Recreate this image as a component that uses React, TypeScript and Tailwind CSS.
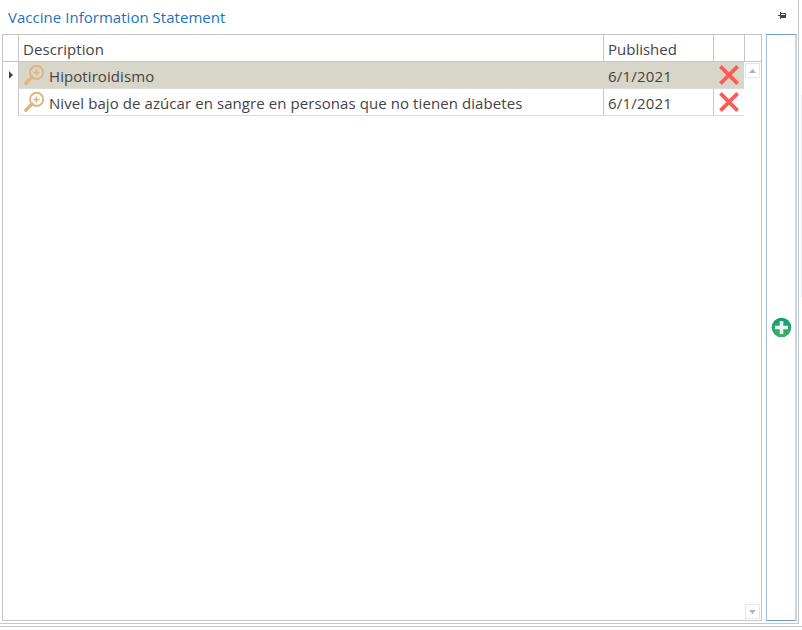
const rows = [
  { name: "Hipotiroidismo", published: "6/1/2021", selected: true },
  {
    name: "Nivel bajo de azúcar en sangre en personas que no tienen diabetes",
    published: "6/1/2021",
    selected: false,
  },
];

function SearchIcon() {
  return (
    <svg width="20" height="20" viewBox="0 0 20 20" fill="none" stroke="#e0b583" className="shrink-0 overflow-visible">
      <circle cx="12.6" cy="7.4" r="6.6" strokeWidth="2" />
      <path d="M8 12L1.8 18.2" strokeWidth="3.4" strokeLinecap="round" />
      <path d="M12.5 4.4v6.2M9.4 7.5h6.2" strokeWidth="1.7" />
    </svg>
  );
}

function DeleteIcon() {
  return (
    <svg width="20" height="20" viewBox="0 0 20 20" stroke="#ff5a5a" strokeWidth="3.8">
      <path d="M1.4 1.4L18.6 18.6M18.6 1.4L1.4 18.6" />
    </svg>
  );
}

function PinIcon() {
  return (
    <svg width="8" height="7" viewBox="0 0 8 7" fill="#444" shapeRendering="crispEdges">
      <path d="M0 3h2v1H0zM2 0h1v7H2zM3 1h5v5H3z" />
      <path d="M3 2h4v1H3z" fill="#fff" />
    </svg>
  );
}

function ScrollButton({ down = false }: { down?: boolean }) {
  return (
    <div className="flex h-[15px] w-[15px] items-center justify-center border border-[#e6e6e6]">
      <svg width="7" height="4" viewBox="0 0 7 4" fill="#b2b2b2">
        <path d={down ? "M0 0h7L3.5 4z" : "M0 4h7L3.5 0z"} />
      </svg>
    </div>
  );
}

export default function App() {
  return (
    <div className="flex h-[630px] w-[802px] overflow-hidden bg-white font-['Open_Sans','Noto_Sans',sans-serif] text-[15px] tracking-[0.08px] text-[#444]">
      <div className="flex w-full flex-col">
        <div className="flex h-[624px]">
          <div className="flex w-[799px] flex-col border-r border-b border-[#c6c6c6]">
            <div className="flex h-[34px] items-start justify-between pr-3 pl-2">
              <h1 className="pt-[7px] leading-[20px] tracking-[0.03px] whitespace-nowrap text-[#1e73be]">
                Vaccine Information Statement
              </h1>
              <div className="pt-3">
                <PinIcon />
              </div>
            </div>

            <div className="flex h-[587px] pl-[2px]">
              {/* Grid */}
              <div className="flex w-[760px] flex-col border border-[#c6c6c6]">
                <div className="flex h-[27px] shrink-0 border-b border-[#c6c6c6] leading-[28px]">
                  <div className="w-4 border-r border-[#c6c6c6]" />
                  <div className="w-[585px] border-r border-[#c6c6c6] pl-1">Description</div>
                  <div className="w-[110px] border-r border-[#c6c6c6] pl-1 tracking-normal">Published</div>
                  <div className="w-[31px] border-r border-[#c6c6c6]" />
                </div>

                <div className="flex flex-1">
                  <div className="flex w-[15px] justify-end pt-[9px] pr-[5px]">
                    <svg width="4" height="8" viewBox="0 0 4 8" fill="#444">
                      <path d="M0 0l4 4-4 4z" />
                    </svg>
                  </div>
                  <div className="w-[726px]">
                    {rows.map((row) => (
                      <div
                        key={row.name}
                        className={`flex h-[27px] border-b border-l border-b-[#dcdcdc] border-l-[#c6c6c6] leading-[28px] ${
                          row.selected ? "bg-[#d8d5c9]" : "bg-white"
                        }`}
                      >
                        <div
                          className={`flex w-[585px] border-r pt-[3px] pl-[5px] ${
                            row.selected ? "border-[#d8d5c9]" : "border-[#c3c9d5]"
                          }`}
                        >
                          <SearchIcon />
                          <span className="-mt-[3px] pl-[5px] whitespace-nowrap">{row.name}</span>
                        </div>
                        <div
                          className={`w-[110px] border-r pl-1 tracking-[0.2px] ${
                            row.selected ? "border-[#d8d5c9]" : "border-[#c3c9d5]"
                          }`}
                        >
                          {row.published}
                        </div>
                        <div className="pt-[3px] pl-[5px]">
                          <DeleteIcon />
                        </div>
                      </div>
                    ))}
                  </div>
                  <div className="flex flex-col justify-between pt-px pb-px pl-[1px]">
                    <ScrollButton />
                    <ScrollButton down />
                  </div>
                </div>
              </div>

              {/* Add bar */}
              <div className="ml-1 flex w-[31px] items-center justify-center border-y border-r-2 border-l border-y-[#6d9bd1] border-r-[#c3d7ec] border-l-[#9dbbe3]">
                <svg width="20" height="20" viewBox="0 0 20 20" className="overflow-visible">
                  <defs>
                    <linearGradient id="add" x1="0" y1="0" x2="0" y2="1">
                      <stop offset="0" stopColor="#159a76" />
                      <stop offset="1" stopColor="#3fb163" />
                    </linearGradient>
                  </defs>
                  <circle cx="10.5" cy="9.5" r="9.8" fill="url(#add)" />
                  <path d="M10.5 3v13M4 9.5h13" stroke="#e8f6ee" strokeWidth="3.6" />
                </svg>
              </div>
            </div>
          </div>
          <div className="mt-[95px] ml-[2px] h-[202px] w-px bg-[#e8f0f8]" />
        </div>
        <div className="mt-[2px] h-px bg-[#c6c6c6]" />
      </div>
    </div>
  );
}
